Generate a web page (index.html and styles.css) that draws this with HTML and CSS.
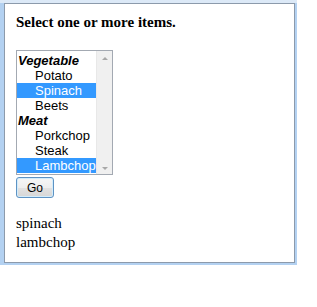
FILE: index.html
```html
<!DOCTYPE html>
<html lang="en">
<head>
    <meta charset="UTF-8">
    <title>Select one or more items</title>
    <link rel="stylesheet" href="styles.css">
</head>
<body>
    <div class="frame">
        <div class="pane">
            <h4 class="title">Select one or more items.</h4>
            <form class="pick_form">
                <div class="listbox">
                    <ul class="options">
                        <li class="group">Vegetable</li>
                        <li class="opt">Potato</li>
                        <li class="opt selected">Spinach</li>
                        <li class="opt">Beets</li>
                        <li class="group">Meat</li>
                        <li class="opt">Porkchop</li>
                        <li class="opt">Steak</li>
                        <li class="opt selected">Lambchop</li>
                    </ul>
                    <div class="scrollbar">
                        <span class="arrow up"></span>
                        <span class="arrow down"></span>
                    </div>
                </div>
                <button type="button" class="go_btn">Go</button>
            </form>
            <p class="result">spinach<br>lambchop</p>
        </div>
    </div>
</body>
</html>
```

FILE: styles.css
```css
* {
    margin: 0;
    padding: 0;
    box-sizing: border-box;
}

body {
    background-color: #fff;
}

/* window frame */
.frame {
    width: 297px;
    height: 265px;
    padding: 0 2px 2px 4px;
    background-color: #b3d1f1;
    border-top: 3px solid #dce9f7;
}

.pane {
    height: 100%;
    border: 1px solid #8c9aab;
    background-color: #fff;
    padding: 9px 11px 0;
}

.title {
    font-family: "Liberation Serif", "Times New Roman", serif;
    font-size: 15px;
    font-weight: bold;
    line-height: 18px;
    color: #000;
}

.pick_form {
    margin-top: 19px;
}

/* listbox */
.listbox {
    display: flex;
    width: 97px;
    height: 125px;
    border: 1px solid #a3a9b2;
    background-color: #fff;
}

.options {
    width: 79px;
    padding-top: 2px;
    list-style: none;
    font-family: "Liberation Sans", Arial, sans-serif;
    font-size: 13px;
    line-height: 15px;
    color: #000;
    white-space: nowrap;
    overflow: hidden;
}

.group {
    padding-left: 1px;
    font-weight: bold;
    font-style: italic;
}

.opt {
    padding-left: 18px;
}

.selected {
    background-color: #3399ff;
    color: #fff;
}

.scrollbar {
    flex: 1;
    display: flex;
    flex-direction: column;
    justify-content: space-between;
    align-items: center;
    padding: 6px 0 4px;
    background-color: #f0f0f0;
    border-left: 1px solid #e8e8e8;
}

.arrow {
    width: 0;
    height: 0;
    border-left: 3px solid transparent;
    border-right: 3px solid transparent;
}

.up {
    border-bottom: 3px solid #a8a8a8;
}

.down {
    border-top: 3px solid #a8a8a8;
}

/* button */
.go_btn {
    display: block;
    width: 38px;
    height: 21px;
    margin-top: 2px;
    font-family: "Liberation Sans", Arial, sans-serif;
    font-size: 12px;
    color: #000;
    border: 1px solid #5e93c4;
    border-radius: 3px;
    box-shadow: inset 0 0 0 1px #d2ecfb;
    background: linear-gradient(#f6f6f6 0%, #eeeeee 50%, #e2e2e2 51%, #d6d6d6 100%);
}

.result {
    margin-top: 16px;
    font-family: "Liberation Serif", "Times New Roman", serif;
    font-size: 15px;
    line-height: 19px;
    color: #000;
}
```
